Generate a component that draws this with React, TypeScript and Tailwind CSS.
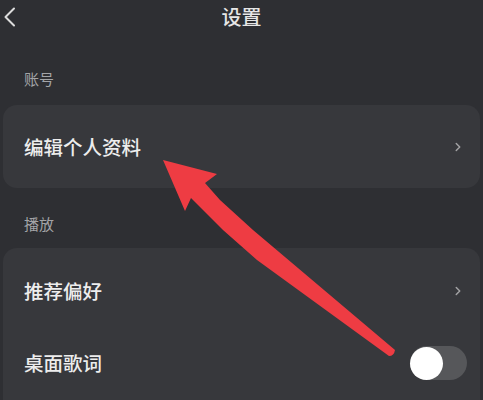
import { ChevronRight } from 'lucide-react';

const font = { fontFamily: '"Noto Sans CJK SC", "Noto Sans", sans-serif' };

function SectionLabel({ text, className }: { text: string; className: string }) {
  return (
    <div className={`pl-[24px] text-[15px] leading-[20px] text-[#a3a4a7] ${className}`}>{text}</div>
  );
}

function Toggle() {
  return (
    <div className="w-[57px] h-[34px] rounded-full bg-[#56575a] flex items-center">
      <div className="w-[33px] h-[33px] rounded-full bg-white" />
    </div>
  );
}

export default function App() {
  return (
    <div className="relative w-full h-[400px] overflow-hidden bg-[#2e2f33]" style={font}>
      {/* top bar */}
      <header className="h-[34px] grid grid-cols-[1fr_auto_1fr] items-center">
        <div className="pl-[3px] flex items-center">
          <svg width="14" height="20" viewBox="0 0 14 20" fill="none">
            <path d="M11 1.5 L2.5 10 L11 18.5" stroke="#dcdcdc" strokeWidth="2" strokeLinecap="round" strokeLinejoin="round" />
          </svg>
        </div>
        <h1 className="text-[20px] leading-none font-medium text-[#e6e6e6]">设置</h1>
        <div />
      </header>

      <SectionLabel text="账号" className="mt-[35px]" />
      <div className="mt-[16px] mx-[3px] h-[83px] rounded-[14px] bg-[#37383c] flex items-center justify-between pl-[21px] pr-[15px]">
        <span className="text-[19.5px] leading-none font-medium text-[#ededed]">编辑个人资料</span>
        <ChevronRight className="w-[14px] h-[14px] text-[#a2a2a4]" strokeWidth={2.5} />
      </div>

      <SectionLabel text="播放" className="mt-[26px]" />
      <div className="mt-[14px] mx-[3px] h-[200px] rounded-[14px] bg-[#37383c] pt-[7px]">
        <div className="h-[72px] flex items-center justify-between pl-[21px] pr-[15px]">
          <span className="text-[19.5px] leading-none font-medium text-[#ededed]">推荐偏好</span>
          <ChevronRight className="w-[14px] h-[14px] text-[#a2a2a4]" strokeWidth={2.5} />
        </div>
        <div className="h-[72px] flex items-center justify-between pl-[21px] pr-[13px]">
          <span className="text-[19.5px] leading-none font-medium text-[#ededed]">桌面歌词</span>
          <Toggle />
        </div>
      </div>

      {/* red annotation arrow */}
      <svg className="absolute inset-0 pointer-events-none" width="483" height="400" viewBox="0 0 483 400">
        <path
          d="M163 160 L217 174 L205 183 L220 200 L253 230 L395 350 Q394 356 389 356 L257 260 L223 230 L191 198 L185 211 Z"
          fill="#ee3c43"
          strokeLinejoin="round"
        />
      </svg>
    </div>
  );
}
